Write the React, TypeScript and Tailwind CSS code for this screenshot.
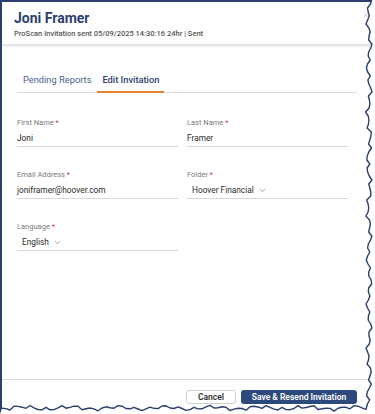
import { ChevronDown, X } from "lucide-react";

const NAVY = "#2c3f6e";

function tornPath() {
  // deterministic wobble for right and bottom torn edges
  const wob = (i: number, s: number) =>
    Math.sin(i * 1.7 + s) * 1.6 + Math.sin(i * 0.53 + s * 2) * 1.4 + Math.sin(i * 3.1) * 0.6;
  const pts: string[] = [];
  for (let y = 0; y <= 406; y += 4) {
    pts.push(`${(369 + wob(y / 4, 1)).toFixed(1)},${y}`);
  }
  for (let x = 366; x >= 0; x -= 4) {
    pts.push(`${x},${(408 + wob(x / 4, 4) * 0.9).toFixed(1)}`);
  }
  return pts;
}

function TornEdge() {
  const pts = tornPath();
  const fill = `M375,0 L${pts.join(" L")} L0,414 L375,414 Z`;
  return (
    <svg className="pointer-events-none absolute inset-0" width={375} height={414}>
      <path d={fill} fill="#ffffff" />
      <polyline points={pts.join(" ")} fill="none" stroke={NAVY} strokeWidth={1.4} strokeLinejoin="round" />
    </svg>
  );
}

function Label({ children }: { children: string }) {
  return (
    <div className="text-[7.5px] leading-[10px] text-[#7a7a7a]">
      {children} <span className="text-[#d0343a]">*</span>
    </div>
  );
}

function Field({ label, value, select, indent }: { label: string; value: string; select?: boolean; indent?: boolean }) {
  return (
    <div className="flex flex-col">
      <Label>{label}</Label>
      <div className={`mt-[4px] flex h-[12px] items-center gap-[4px] text-[8.3px] text-[#2a2a2a] ${indent ? "pl-[5px]" : ""}`}>
        <span>{value}</span>
        {select && <ChevronDown size={9} strokeWidth={1.4} className="text-[#555]" />}
      </div>
      <div className="mt-[2px] h-px bg-[#d9d9d9]" />
    </div>
  );
}

export default function App() {
  return (
    <div className="relative h-[414px] w-[375px] overflow-hidden bg-white" style={{ fontFamily: "Roboto, 'Liberation Sans', sans-serif" }}>
      <div className="flex h-[414px] w-[372px] flex-col border-l-2 border-t-2 border-[#2c3f6e]">
        <header className="relative h-[43px] border-b border-[#dedede] px-[12px] pt-[8px] shadow-[0_1px_3px_rgba(0,0,0,0.12)]">
          <h1 className="text-[14px] font-bold leading-[16px] text-[#2c3f6e]">Joni Framer</h1>
          <div className="mt-[3px] text-[7.5px] font-medium leading-[10px] text-[#555]">
            ProScan Invitation sent 05/09/2025 14:30:16 24hr | Sent
          </div>
          <X size={8} strokeWidth={1.2} className="absolute right-[2px] top-[9px] text-[#9a9a9a]" />
        </header>

        <nav className="mx-[15px] mt-[28px] flex border-b border-[#dcdcdc] pl-[6px]">
          <div className="pb-[5px] pr-[6px] text-[9.3px] leading-[14px] text-[#4a5f8a]">Pending Reports</div>
          <div className="mb-[-1px] border-b-2 border-[#e8822e] px-[5px] pb-[4px] text-[9.3px] font-medium leading-[14px] text-[#2c3f6e]">
            Edit Invitation
          </div>
        </nav>

        <div className="mt-[25px] grid grid-cols-[161px_161px] gap-x-[9px] gap-y-[23px] pl-[15px]">
          <Field label="First Name" value="Joni" />
          <Field label="Last Name" value="Framer" />
          <Field label="Email Address" value="joniframer@hoover.com" />
          <Field label="Folder" value="Hoover Financial" select indent />
          <Field label="Language" value="English" select indent />
        </div>

        <div className="flex-1" />

        <footer className="mb-[10px] flex justify-end gap-[5px] border-t border-[#dcdcdc] pr-[15px] pt-[10px]">
          <button className="h-[14px] w-[50px] rounded-[3px] border border-[#cfcfcf] bg-white text-[8.5px] font-semibold text-[#333]">
            Cancel
          </button>
          <button className="h-[14px] w-[116px] rounded-[3px] bg-[#2e4a7d] text-[8.5px] font-semibold text-white">
            Save &amp; Resend Invitation
          </button>
        </footer>
      </div>
      <TornEdge />
    </div>
  );
}
